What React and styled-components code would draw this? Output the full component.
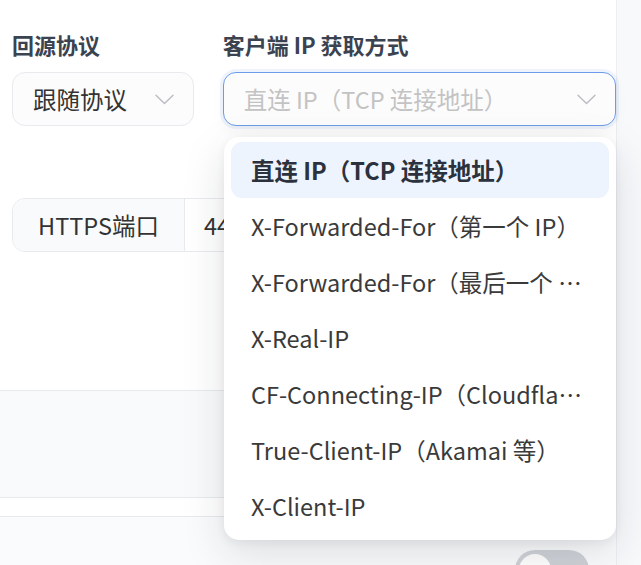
import React from "react";
import styled, { createGlobalStyle } from "styled-components";

const Global = createGlobalStyle`
  html, body { margin: 0; padding: 0; background: #ffffff; }
  body {
    font-family: "Noto Sans CJK SC", "Noto Sans", sans-serif;
    color: #333;
    overflow: hidden;
  }
  * { box-sizing: border-box; }
`;

const Page = styled.div`
  position: relative;
  width: 641px;
  height: 565px;
  overflow: hidden;
  background: #f8f9fb;
`;

const Content = styled.div`
  width: 617px;
  height: 100%;
  background: #ffffff;
  border-right: 1px solid #eceef2;
  display: flex;
  flex-direction: column;
  & > * { flex-shrink: 0; }
`;

const FieldRow = styled.div`
  display: flex;
  gap: 29px;
  padding: 28px 0 0 12px;
`;

const Field = styled.div`
  display: flex;
  flex-direction: column;
  gap: 12px;
  width: ${(p) => p.$w}px;
  position: relative;
`;

const Label = styled.div`
  font-size: 22px;
  font-weight: 700;
  line-height: 32px;
  color: #3b4350;
  white-space: nowrap;
`;

const SelectBox = styled.div`
  height: 54px;
  border-radius: 13px;
  border: 1px solid ${(p) => (p.$focus ? "#6c9ce9" : "#e8eaee")};
  background: #fcfcfd;
  box-shadow: ${(p) =>
    p.$focus
      ? "0 0 0 3px rgba(96,150,235,0.10), 0 6px 14px rgba(0,0,0,0.04)"
      : "none"};
  display: flex;
  align-items: center;
  padding: 0 19px 0 20px;
  gap: 12px;
`;

const SelectText = styled.span`
  flex: 1;
  font-size: 23.5px;
  color: ${(p) => (p.$placeholder ? "#c3c3c3" : "#333333")};
  white-space: nowrap;
  overflow: hidden;
`;

const Chevron = () => (
  <svg width="19" height="11" viewBox="0 0 19 11" fill="none">
    <path d="M1 1.2 L9.5 9.6 L18 1.2" stroke="#b9bcc2" strokeWidth="1.4" strokeLinecap="round" strokeLinejoin="round" />
  </svg>
);

const InputGroup = styled.div`
  margin: 72px 0 0 12px;
  width: 420px;
  height: 54px;
  border: 1px solid #e8eaee;
  border-radius: 13px;
  display: flex;
  overflow: hidden;
`;

const Addon = styled.div`
  width: 172px;
  background: #f9fafb;
  border-right: 1px solid #e8eaee;
  display: flex;
  align-items: center;
  justify-content: center;
  font-size: 23.5px;
  color: #333;
`;

const GroupInput = styled.div`
  flex: 1;
  display: flex;
  align-items: center;
  padding-left: 19px;
  font-size: 23.5px;
  color: #333;
`;

const Band = styled.div`
  margin-top: 138px;
  height: 108px;
  background: #f9fafb;
  border-top: 1px solid #e7e9ed;
  border-bottom: 1px solid #e7e9ed;
`;

const Footer = styled.div`
  margin-top: 18px;
  flex: 1 0 auto;
  background: #fafbfc;
  border-top: 1px solid #e7e9ed;
  display: flex;
  justify-content: flex-end;
  padding: 33px 27px 0 0;
`;

const Toggle = styled.div`
  width: 74px;
  height: 40px;
  border-radius: 20px;
  background: #cfd2d7;
  position: relative;
  &::after {
    content: "";
    position: absolute;
    left: 4px;
    top: 4px;
    width: 32px;
    height: 32px;
    border-radius: 50%;
    background: #ffffff;
  }
`;

const Menu = styled.div`
  position: absolute;
  top: 137px;
  left: 224px;
  width: 392px;
  padding: 5px 7px 6px;
  background: #ffffff;
  border-radius: 15px;
  box-shadow: 0 14px 44px rgba(20, 30, 50, 0.13), 0 3px 10px rgba(20, 30, 50, 0.06);
  display: flex;
  flex-direction: column;
`;

const Option = styled.div`
  height: 56px;
  border-radius: 11px;
  padding: 0 22px 0 20px;
  display: flex;
  align-items: center;
  background: ${(p) => (p.$active ? "#eef4fd" : "transparent")};
  font-size: 23.5px;
  font-weight: ${(p) => (p.$active ? 700 : 400)};
  color: ${(p) => (p.$active ? "#2b323d" : "#3a3a3a")};
  white-space: nowrap;
  overflow: hidden;
`;

const OptionText = styled.span`
  display: block;
  overflow: hidden;
  text-overflow: ellipsis;
  white-space: nowrap;
`;

const options = [
  "直连 IP（TCP 连接地址）",
  "X-Forwarded-For（第一个 IP）",
  "X-Forwarded-For（最后一个 IP）",
  "X-Real-IP",
  "CF-Connecting-IP（Cloudflare）",
  "True-Client-IP（Akamai 等）",
  "X-Client-IP",
];

export default function App() {
  return (
    <Page>
      <Global />
      <Content>
        <FieldRow>
          <Field $w={182}>
            <Label>回源协议</Label>
            <SelectBox>
              <SelectText>跟随协议</SelectText>
              <Chevron />
            </SelectBox>
          </Field>
          <Field $w={394}>
            <Label>客户端 IP 获取方式</Label>
            <SelectBox $focus>
              <SelectText $placeholder>直连 IP（TCP 连接地址）</SelectText>
              <Chevron />
            </SelectBox>
          </Field>
        </FieldRow>
        <InputGroup>
          <Addon>HTTPS端口</Addon>
          <GroupInput>443</GroupInput>
        </InputGroup>
        <Band />
        <Footer>
          <Toggle />
        </Footer>
      </Content>
      <Menu>
        {options.map((o, i) => (
          <Option key={o} $active={i === 0}>
            <OptionText>{o}</OptionText>
          </Option>
        ))}
      </Menu>
    </Page>
  );
}
